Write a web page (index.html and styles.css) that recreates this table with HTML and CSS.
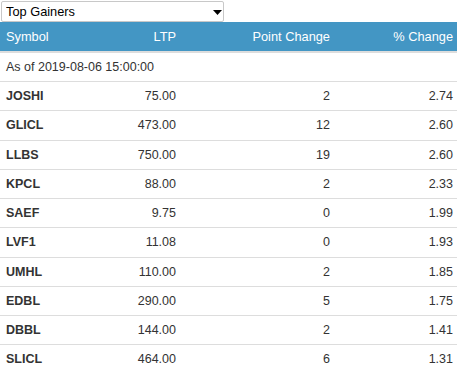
FILE: index.html
```html
<!DOCTYPE html>
<html>
<head>
<meta charset="utf-8">
<link rel="stylesheet" href="styles.css">
</head>
<body>
<div class="picker">
  <select class="picker-select">
    <option>Top Gainers</option>
  </select>
  <svg class="picker-arrow" width="9" height="5" viewBox="0 0 9 5"><path d="M0 0H9L4.5 5Z" fill="#000"/></svg>
</div>
<table class="movers">
  <colgroup>
    <col class="c-sym"><col class="c-ltp"><col class="c-pt"><col class="c-pct">
  </colgroup>
  <thead>
    <tr><th class="left">Symbol</th><th>LTP</th><th>Point Change</th><th>% Change</th></tr>
  </thead>
  <tbody>
    <tr><td class="left asof" colspan="4">As of 2019-08-06 15:00:00</td></tr>
    <tr><td class="sym">JOSHI</td><td>75.00</td><td>2</td><td>2.74</td></tr>
    <tr><td class="sym">GLICL</td><td>473.00</td><td>12</td><td>2.60</td></tr>
    <tr><td class="sym">LLBS</td><td>750.00</td><td>19</td><td>2.60</td></tr>
    <tr><td class="sym">KPCL</td><td>88.00</td><td>2</td><td>2.33</td></tr>
    <tr><td class="sym">SAEF</td><td>9.75</td><td>0</td><td>1.99</td></tr>
    <tr><td class="sym">LVF1</td><td>11.08</td><td>0</td><td>1.93</td></tr>
    <tr><td class="sym">UMHL</td><td>110.00</td><td>2</td><td>1.85</td></tr>
    <tr><td class="sym">EDBL</td><td>290.00</td><td>5</td><td>1.75</td></tr>
    <tr><td class="sym">DBBL</td><td>144.00</td><td>2</td><td>1.41</td></tr>
    <tr><td class="sym">SLICL</td><td>464.00</td><td>6</td><td>1.31</td></tr>
  </tbody>
</table>
</body>
</html>
```
FILE: styles.css
```css
html, body {
  margin: 0;
  padding: 0;
  background: #fff;
  font-family: "Liberation Sans", Arial, sans-serif;
  color: #333;
}
.picker {
  position: relative;
  width: 223px;
  margin: 1px 0 0 1px;
  height: 21px;
}
.picker-select {
  -webkit-appearance: none;
  appearance: none;
  box-sizing: border-box;
  width: 223px;
  height: 21px;
  margin: 0;
  padding: 0 0 0 4px;
  border: 1px solid #c8c8c8;
  border-radius: 2px;
  background: #fff;
  font-family: "Liberation Sans", Arial, sans-serif;
  font-size: 12.8px;
  color: #000;
  outline: none;
}
.picker-arrow {
  position: absolute;
  left: 212px;
  top: 9px;
}
.movers {
  width: 457px;
  border-collapse: collapse;
  table-layout: fixed;
  font-size: 12.5px;
}
.c-sym { width: 100px; }
.c-ltp { width: 81px; }
.c-pt { width: 154px; }
.c-pct { width: 122px; }
.movers th {
  background: #4396c4;
  color: #fff;
  font-weight: normal;
  font-size: 12.8px;
  text-align: right;
  padding: 6px 5px 6px 5px;
  line-height: 17px;
  border-bottom: 2px solid #dddddd;
}
.movers th:last-child, .movers td:last-child { padding-right: 4px; }
.movers td {
  text-align: right;
  padding: 6px 5px;
  line-height: 16.22px;
  border-top: 1px solid #dddddd;
  color: #333;
}
.movers .left { text-align: left; padding-left: 6px; }
.movers td.asof { border-top: none; text-align: left; padding-left: 6px; }
.movers td.sym { text-align: left; font-weight: bold; padding-left: 6px; }
```
